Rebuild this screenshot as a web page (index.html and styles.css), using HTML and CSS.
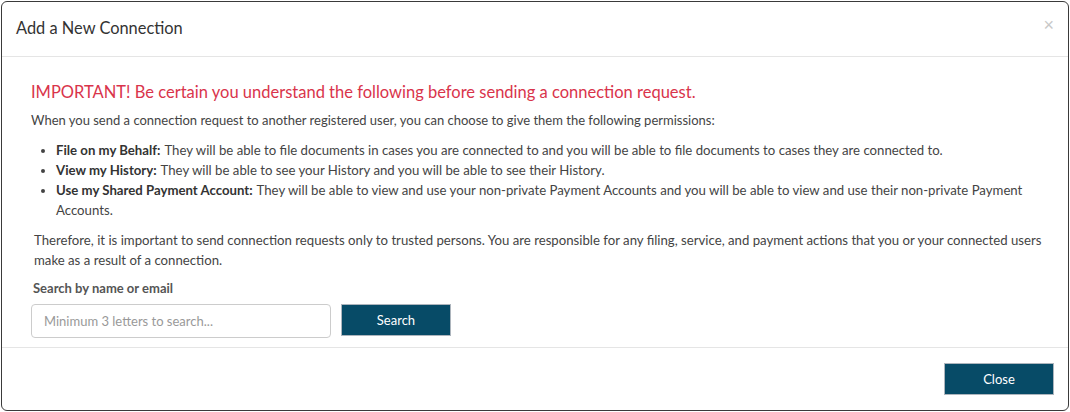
FILE: index.html
```html
<!DOCTYPE html>
<html lang="en">
<head>
<meta charset="utf-8">
<title>Add a New Connection</title>
<link rel="stylesheet" href="styles.css">
</head>
<body>
<div class="modal">
  <div class="modal-header">
    <h4 class="modal-title">Add a New Connection</h4>
    <button class="close" type="button" aria-label="Close">&times;</button>
  </div>
  <div class="modal-body">
    <h4 class="important">IMPORTANT! Be certain you understand the following before sending a connection request.</h4>
    <p class="intro">When you send a connection request to another registered user, you can choose to give them the following permissions:</p>
    <ul class="perms">
      <li><b>File on my Behalf:</b> They will be able to file documents in cases you are connected to and you will be able to file documents to cases they are connected to.</li>
      <li><b>View my History:</b> They will be able to see your History and you will be able to see their History.</li>
      <li><b>Use my Shared Payment Account:</b> They will be able to view and use your non-private Payment Accounts and you will be able to view and use their non-private Payment Accounts.</li>
    </ul>
    <p class="therefore">Therefore, it is important to send connection requests only to trusted persons. You are responsible for any filing, service, and payment actions that you or your connected users make as a result of a connection.</p>
    <label class="search-label" for="q">Search by name or email</label>
    <div class="search-row">
      <input id="q" class="search-input" type="text" placeholder="Minimum 3 letters to search...">
      <button class="btn" type="button">Search</button>
    </div>
  </div>
  <div class="modal-footer">
    <button class="btn" type="button">Close</button>
  </div>
</div>
</body>
</html>
```
FILE: styles.css
```css
html, body {
  margin: 0;
  padding: 0;
  background: #ffffff;
}
body {
  padding: 1px;
  font-family: Lato, "Liberation Sans", sans-serif;
  color: #444;
}
.modal {
  box-sizing: border-box;
  width: 1068px;
  height: 410px;
  border: 1px solid #3a3a3a;
  border-radius: 6px;
  background: #fff;
  display: flex;
  flex-direction: column;
  overflow: hidden;
}
.modal-header {
  height: 55px;
  box-sizing: border-box;
  border-bottom: 1px solid #e5e5e5;
  display: flex;
  align-items: center;
  justify-content: space-between;
  padding: 0 14px 3px 14px;
}
.modal-title {
  margin: 0;
  font-size: 16.4px;
  font-weight: normal;
  color: #333;
}
.close {
  border: 0;
  background: none;
  color: #c8c8c8;
  font-size: 18px;
  padding: 0;
  margin-top: -5px;
  font-family: "Liberation Sans", sans-serif;
}
.modal-body {
  flex: 1;
  padding: 24px 15px 0 29px;
  border-bottom: 1px solid #e5e5e5;
}
.important {
  margin: 0 0 7px;
  font-size: 16.5px;
  font-weight: normal;
  color: #d9344b;
  line-height: 22px;
}
.intro {
  margin: 0;
  font-size: 13px;
  line-height: 20px;
}
.perms {
  margin: 10px 0 10px;
  padding-left: 25px;
  font-size: 13.2px;
  line-height: 20px;
}
.perms b {
  color: #333;
  margin-right: 1px;
}
.therefore {
  margin: 0 0 9px;
  padding-left: 3px;
  font-size: 13.2px;
  line-height: 20px;
}
.search-label {
  display: block;
  font-size: 13px;
  font-weight: bold;
  color: #555;
  margin: 0 0 7px 2px;
  line-height: 18px;
}
.search-row {
  display: flex;
  align-items: flex-start;
  gap: 10px;
}
.search-input {
  box-sizing: border-box;
  width: 300px;
  height: 34px;
  border: 1px solid #ccc;
  border-radius: 4px;
  padding: 0 12px;
  font-family: inherit;
  font-size: 13px;
  color: #555;
}
.search-input::placeholder {
  color: #999;
}
.btn {
  box-sizing: border-box;
  width: 110px;
  height: 32px;
  background: #074b67;
  color: #fff;
  border: 1px solid #adb5bd;
  border-radius: 0;
  font-family: inherit;
  font-size: 13px;
}
.modal-footer {
  height: 62px;
  box-sizing: border-box;
  display: flex;
  justify-content: flex-end;
  align-items: flex-start;
  padding: 15px 14px 0 0;
}
```
